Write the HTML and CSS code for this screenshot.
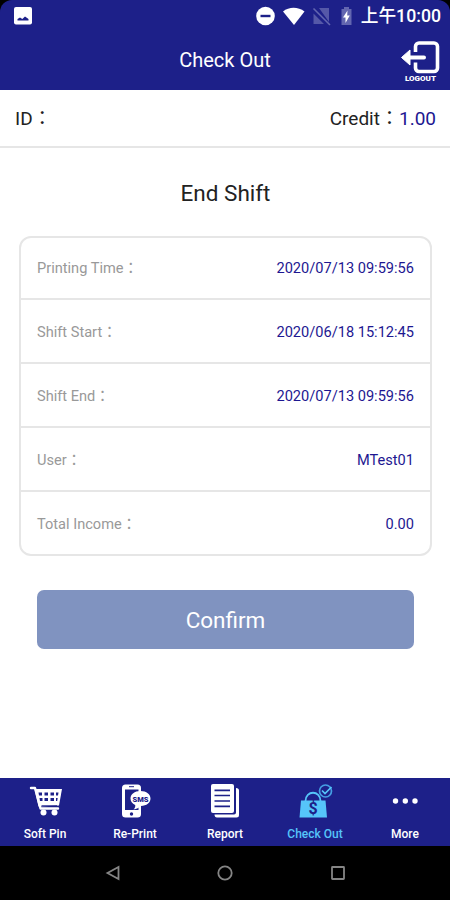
FILE: index.html
```html
<!DOCTYPE html>
<html lang="en">
<head>
    <meta charset="UTF-8">
    <meta name="viewport" content="width=device-width, initial-scale=1.0">
    <title>Check Out</title>
    <link rel="stylesheet" href="styles.css">
</head>
<body>
    <div class="screen">
        <div class="top">
            <div class="status-bar">
                <svg class="status-photo" width="18" height="18" viewBox="0 0 18 18">
                    <rect width="18" height="17.5" rx="2" fill="#fff"/>
                    <path d="M3.500 13.500v-1.500l2.500-1.500 2.300 1.500L11 9.500l3.500 2.500v1.500z" fill="#1d2089"/>
                </svg>
                <svg width="106" height="24" viewBox="0 0 106 24" class="status-icons">
                    <circle cx="10.500" cy="12" r="9.300" fill="#fff"/>
                    <path d="M5.500 12h10" stroke="#1d2089" stroke-width="2.400"/>
                    <path d="M28 7.500c6-5 15-5 21.500 0L39 21z" fill="#fff"/>
                    <path d="M64 4h10v14zM58.500 9.500L69 20H58.500z" fill="#5558a8"/>
                    <path d="M58.500 4.500L75 21" stroke="#6366b0" stroke-width="1.600"/>
                    <path d="M86.500 5h2.500V3h5v2h2.500v16h-10z" fill="#6366b0"/>
                    <path d="M92.500 6.500L88 13.500h2.500V19l4.300-7.500h-2.600z" fill="#fff"/>
                </svg>
                <span class="clock">上午10:00</span>
            </div>
            <div class="title-bar">
                <h1>Check Out</h1>
                <svg class="logout" width="42" height="44" viewBox="0 0 42 44">
                    <path d="M15.500 12V6.500a3.500 3.500 0 0 1 3.500-3.500H34a3.500 3.500 0 0 1 3.500 3.500V28a3.500 3.500 0 0 1-3.500 3.500H19a3.500 3.500 0 0 1-3.500-3.500v-5.500" fill="none" stroke="#fff" stroke-width="3.600"/>
                    <path d="M6 17.500h18" stroke="#fff" stroke-width="4" stroke-linecap="round"/>
                    <path d="M1.500 17.500L10 10v15z" fill="#fff" stroke="#fff" stroke-linejoin="round"/>
                    <text x="20.500" y="41" class="logout-text" textLength="31" lengthAdjust="spacingAndGlyphs">LOGOUT</text>
                </svg>
            </div>
        </div>

        <div class="account">
            <span>ID：</span>
            <span>Credit：<b class="credit">1.00</b></span>
        </div>

        <div class="content">
            <h2>End Shift</h2>
            <div class="card">
                <div class="row"><span class="label">Printing Time：</span><span class="value">2020/07/13 09:59:56</span></div>
                <div class="row"><span class="label">Shift Start：</span><span class="value">2020/06/18 15:12:45</span></div>
                <div class="row"><span class="label">Shift End：</span><span class="value">2020/07/13 09:59:56</span></div>
                <div class="row"><span class="label">User：</span><span class="value">MTest01</span></div>
                <div class="row"><span class="label">Total Income：</span><span class="value">0.00</span></div>
            </div>
            <button class="confirm-btn" type="button">Confirm</button>
        </div>

        <div class="tabs">
            <a class="tab">
                <svg width="36" height="36" viewBox="0 0 36 36">
                    <path d="M4 4h4l5.500 20.500H31" fill="none" stroke="#fff" stroke-width="2.400" stroke-linecap="round" stroke-linejoin="round"/>
                    <path d="M7.500 5H35l-3 16.500-20.500 1z" fill="#fff"/>
                    <path d="M11.500 8.500h3.500v3h-3zM17.500 8.500h3.500v3h-3.500zM23.500 8.500H27v3h-3.500zM29 8.500h2.500l-.5 3h-2zM12.500 14h3v3h-2.500zM17.500 14h3.500v3h-3.500zM23.500 14H27v3h-3.500zM29 14h1.700l-.5 3H29z" fill="#1d2089"/>
                    <path d="M14.500 21.800H30" stroke="#1d2089"/>
                    <circle cx="16.500" cy="28.500" r="3" fill="#fff"/>
                    <circle cx="27.500" cy="28.500" r="3" fill="#fff"/>
                </svg>
                <span>Soft Pin</span>
            </a>
            <a class="tab">
                <svg width="36" height="36" viewBox="0 0 36 36">
                    <rect x="5" y=".5" width="19" height="33" rx="3.500" fill="#fff"/>
                    <path d="M8 5.500h13.500v20.500H8z" fill="#1d2089"/>
                    <path d="M12 2.700h5" stroke="#1d2089"/>
                    <circle cx="14.500" cy="30" r="1.700" fill="#1d2089"/>
                    <path d="M23.500 7c6 0 10 3.200 10 7.500s-4 7.300-9.500 7.500c-2 1.800-4.500 3.200-7.500 3.500 1.500-1.500 2-3 1.700-4.500-3-1.500-4.700-3.700-4.700-6.500C13.500 10.200 17.500 7 23.500 7z" fill="#fff"/>
                    <text x="23.500" y="17.500" class="sms-text" textLength="16" lengthAdjust="spacingAndGlyphs">SMS</text>
                </svg>
                <span>Re-Print</span>
            </a>
            <a class="tab">
                <svg width="36" height="36" viewBox="0 0 36 36">
                    <path d="M10 33.500q-2.500 0-2.500-3H27q2 0 2-2V4q3 0 3 2.500V31q0 2.500-2.500 2.500z" fill="#fff"/>
                    <rect x="4" width="23" height="29" rx="2" fill="#fff"/>
                    <path d="M7.500 6.300h15.500M7.500 11.500h15.500M7.500 17h15.500M7.500 22.300h15.500" stroke="#1d2089" stroke-width="1.700"/>
                </svg>
                <span>Report</span>
            </a>
            <a class="tab active">
                <svg width="36" height="36" viewBox="0 0 36 36">
                    <path d="M4 16.500h24.500l1.500 17H2.500z" fill="#56c5fa"/>
                    <path d="M8.500 17c0-11 15-11 15 0" fill="none" stroke="#56c5fa" stroke-width="1.800"/>
                    <circle cx="28.500" cy="7" r="6" fill="#1d2089" stroke="#459fe4" stroke-width="1.700"/>
                    <path d="M25 6.500l3 3L34.500 3" fill="none" stroke="#56c5fa" stroke-width="1.700"/>
                    <text x="16" y="30" class="dollar">$</text>
                </svg>
                <span>Check Out</span>
            </a>
            <a class="tab">
                <svg width="36" height="36" viewBox="0 0 36 36">
                    <circle cx="8.500" cy="17" r="2.700" fill="#fff"/>
                    <circle cx="18.300" cy="17" r="2.700" fill="#fff"/>
                    <circle cx="28" cy="17" r="2.700" fill="#fff"/>
                </svg>
                <span>More</span>
            </a>
        </div>

        <div class="nav-bar">
            <svg width="16" height="18" viewBox="0 0 16 18"><path d="M13.500 3v12L2.500 9z"/></svg>
            <svg width="16" height="18" viewBox="0 0 16 18"><circle cx="8" cy="9" r="6.700"/></svg>
            <svg width="16" height="18" viewBox="0 0 16 18"><rect x="2" y="3" width="12" height="12" rx=".5"/></svg>
        </div>
    </div>
</body>
</html>
```

FILE: styles.css
```css
body {
    margin: 0;
    background-color: #000;
    font-family: Roboto, "Noto Sans CJK TC", sans-serif;
}
.screen {
    width: 450px;
    height: 900px;
    display: flex;
    flex-direction: column;
    background-color: #000;
}
.top {
    height: 90px;
    border-radius: 12px 12px 0 0;
    background-color: #1d2089;
    color: #fff;
}
.status-bar {
    height: 32px;
    display: flex;
    align-items: center;
    padding: 0 9px 0 14px;
    box-sizing: border-box;
}
.status-icons {
    flex: none;
    margin-left: auto;
    margin-top: -1px;
}
.clock {
    font-size: 17.7px;
    line-height: 32px;
    font-weight: 500;
    white-space: nowrap;
}
.title-bar {
    height: 58px;
    display: flex;
    align-items: center;
    justify-content: center;
    position: relative;
}
h1 {
    margin: 0 0 2px;
    font-size: 20px;
    font-weight: 400;
}
.logout {
    position: absolute;
    right: 8px;
    top: 8px;
}
.logout-text {
    font-size: 7.5px;
    font-weight: 900;
    text-anchor: middle;
    fill: #fff;
}
.account {
    height: 58px;
    box-sizing: border-box;
    border-bottom: 2px solid #e6e6e6;
    background-color: #fff;
    padding: 2px 14px 0 15px;
    display: flex;
    align-items: center;
    justify-content: space-between;
    font-size: 19px;
    line-height: 28px;
    color: #222;
}
.credit {
    font-weight: 400;
    color: #1d1791;
}
.content {
    flex: 1;
    padding: 0 18px 0 19px;
    display: flex;
    flex-direction: column;
    background-color: #fff;
}
h2 {
    margin: 30px 0 27px;
    font-size: 22.5px;
    line-height: 31px;
    font-weight: 400;
    text-align: center;
    color: #222;
}
.card {
    border: 2px solid #e6e6e6;
    border-radius: 12px;
    height: 320px;
    box-sizing: border-box;
}
.row {
    height: 60px;
    display: flex;
    align-items: baseline;
    justify-content: space-between;
    padding: 0 16px;
    font-size: 14.6px;
    line-height: 61px;
}
.row + .row {
    height: 62px;
    line-height: 65px;
    border-top: 2px solid #e6e6e6;
}
.label {
    color: #999;
}
.value {
    color: #1d1791;
}
.confirm-btn {
    margin: 34px 18px 0;
    height: 59px;
    border: none;
    border-radius: 7px;
    background-color: #8093c0;
    color: #fff;
    font-family: inherit;
    font-size: 22.5px;
    padding: 0;
}
.tabs {
    height: 68px;
    display: flex;
    background-color: #1d2089;
    color: #fff;
}
.tab {
    flex: 1;
    display: flex;
    flex-direction: column;
    align-items: center;
    padding-top: 6px;
    font-size: 12px;
    font-weight: 500;
    line-height: 16px;
}
.tab span {
    margin-top: 6px;
}
.active {
    color: #56c5fa;
}
.sms-text {
    font-size: 8px;
    font-weight: 900;
    text-anchor: middle;
    fill: #1d2089;
}
.dollar {
    font-size: 16px;
    font-weight: 700;
    text-anchor: middle;
    fill: #1d2089;
}
.nav-bar {
    height: 54px;
    background-color: #000;
    display: flex;
    align-items: center;
    justify-content: center;
    gap: 96.5px;
}
.nav-bar svg {
    fill: none;
    stroke: #858585;
    stroke-width: 1.8;
}
```
